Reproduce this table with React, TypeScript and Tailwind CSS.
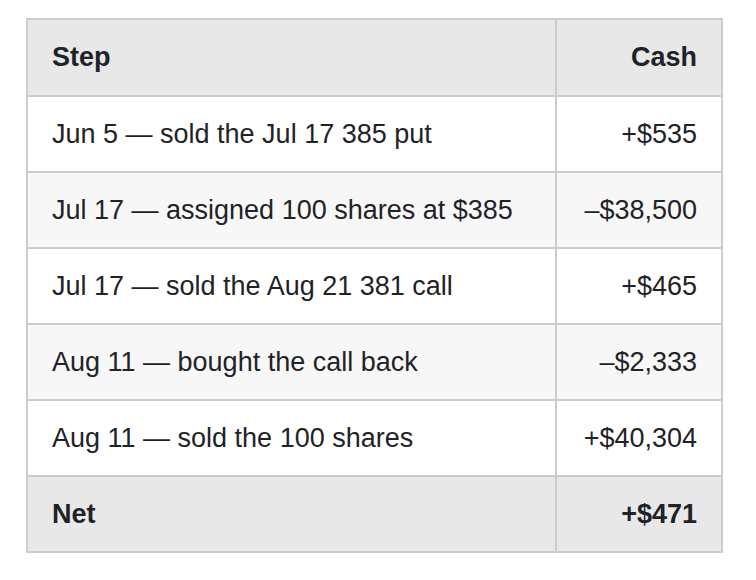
const rows: { step: string; cash: string }[] = [
  { step: 'Jun 5 — sold the Jul 17 385 put', cash: '+$535' },
  { step: 'Jul 17 — assigned 100 shares at $385', cash: '–$38,500' },
  { step: 'Jul 17 — sold the Aug 21 381 call', cash: '+$465' },
  { step: 'Aug 11 — bought the call back', cash: '–$2,333' },
  { step: 'Aug 11 — sold the 100 shares', cash: '+$40,304' },
]

export default function App() {
  return (
    <div className="min-h-[580px] w-[756px] bg-white pl-[26px] pt-[18px] font-['Liberation_Sans',Arial,sans-serif] text-[27px] text-[#1f2328]">
      <table className="w-[697px] table-fixed border-collapse">
        <colgroup>
          <col className="w-[529px]" />
          <col />
        </colgroup>
        <thead>
          <tr className="h-[77px] bg-[#e8e8e8]">
            <th className="border-2 border-[#cccccc] px-6 text-left font-bold">Step</th>
            <th className="border-2 border-[#cccccc] px-6 text-right font-bold">Cash</th>
          </tr>
        </thead>
        <tbody>
          {rows.map((r, i) => (
            <tr key={i} className={i % 2 === 1 ? 'h-[76px] bg-[#f7f7f7]' : 'h-[76px] bg-white'}>
              <td className="border-2 border-[#cccccc] px-6 text-left">{r.step}</td>
              <td className="border-2 border-[#cccccc] px-6 text-right">{r.cash}</td>
            </tr>
          ))}
          <tr className="h-[76px] bg-[#e8e8e8]">
            <td className="border-2 border-[#cccccc] px-6 text-left font-bold">Net</td>
            <td className="border-2 border-[#cccccc] px-6 text-right font-bold">+$471</td>
          </tr>
        </tbody>
      </table>
    </div>
  )
}
